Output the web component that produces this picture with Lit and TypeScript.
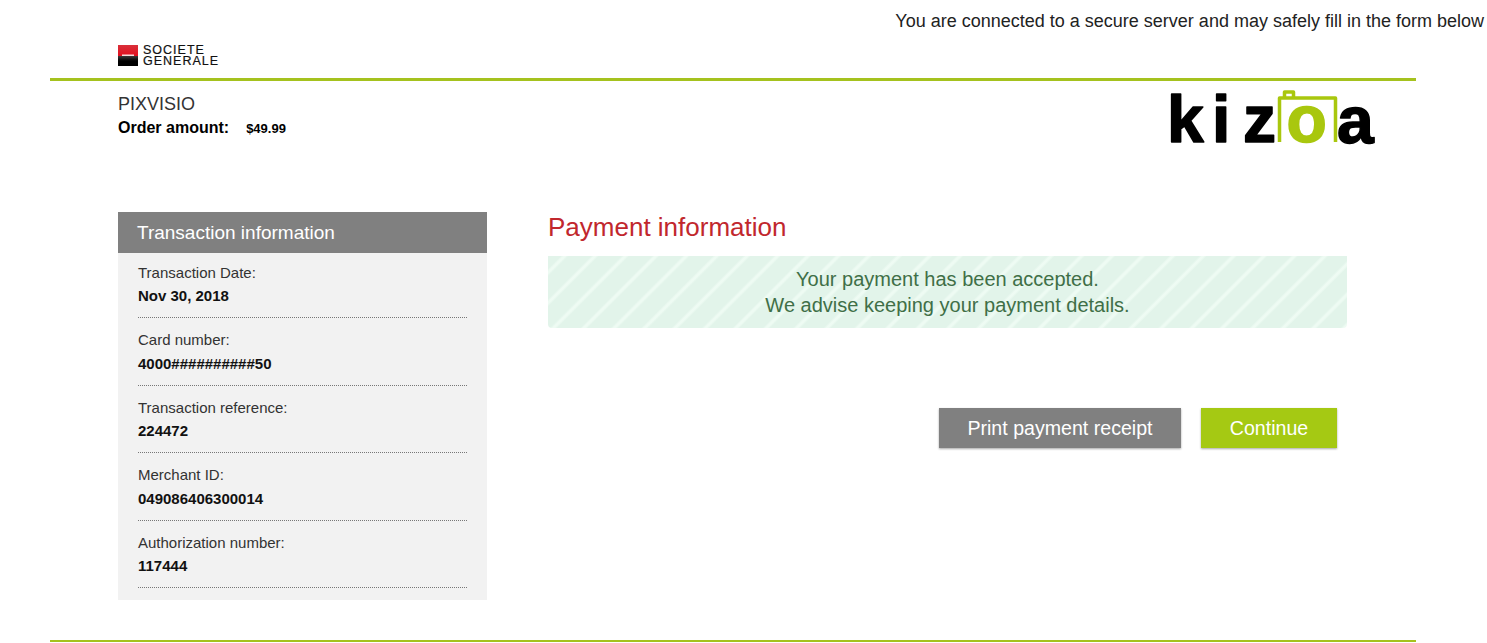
import { LitElement, html, css } from 'lit'
import { customElement } from 'lit/decorators.js'

const rows = [
  ['Transaction Date:', 'Nov 30, 2018'],
  ['Card number:', '4000##########50'],
  ['Transaction reference:', '224472'],
  ['Merchant ID:', '049086406300014'],
  ['Authorization number:', '117444'],
]

@customElement('app-root')
export class AppRoot extends LitElement {
  static styles = css`
    :host {
      display: block;
      width: 1487px;
      height: 643px;
      overflow: hidden;
      background: #fff;
      font-family: 'Liberation Sans', Arial, sans-serif;
      color: #333;
    }

    .secure {
      height: 42px;
      padding: 11px 3px 0 0;
      box-sizing: border-box;
      text-align: right;
      font-size: 18px;
      line-height: 20px;
      color: #222;
    }

    .page {
      width: 1366px;
      margin-left: 50px;
    }

    .bank {
      height: 36px;
      padding: 3px 0 0 68px;
      display: flex;
      align-items: flex-start;
      gap: 5px;
      box-sizing: border-box;
    }

    .bank-mark {
      display: block;
    }

    .bank-name {
      font-size: 12.5px;
      line-height: 11px;
      letter-spacing: 1px;
      color: #111;
      -webkit-text-stroke: 0.2px #111;
    }

    .rule {
      height: 3px;
      background: #a5c21e;
    }

    .order {
      height: 131px;
      padding: 13px 41px 0 68px;
      display: flex;
      justify-content: space-between;
      align-items: flex-start;
      box-sizing: border-box;
    }

    .merchant {
      font-size: 18px;
      line-height: 20px;
    }

    .amount {
      font-size: 16px;
      font-weight: bold;
      color: #000;
      line-height: 18px;
      margin-top: 5px;
      display: flex;
      align-items: baseline;
    }

    .amount small {
      font-size: 13px;
      margin-left: 17px;
    }

    .kizoa {
      display: block;
      margin-top: -14px;
    }

    .content {
      display: flex;
      gap: 61px;
      padding-left: 68px;
      align-items: flex-start;
    }

    .side {
      width: 369px;
      height: 388px;
      background: #f2f2f2;
    }

    .side h2 {
      margin: 0;
      height: 41px;
      padding-left: 19px;
      background: #808080;
      color: #fff;
      font-size: 19px;
      font-weight: normal;
      line-height: 41px;
    }

    .rows {
      padding: 9px 20px 0;
    }

    .row {
      height: 67.5px;
      box-sizing: border-box;
      border-bottom: 1px dotted #777;
      padding-top: 12.4px;
    }

    .row:first-child {
      height: 56px;
      padding-top: 0.8px;
    }

    .label {
      font-size: 15px;
      line-height: 20px;
    }

    .value {
      font-size: 15px;
      line-height: 20px;
      margin-top: 3.4px;
      font-weight: bold;
      color: #111;
    }

    .main {
      width: 799px;
    }

    .main h1 {
      margin: 0;
      height: 44px;
      color: #c1272d;
      font-size: 26px;
      font-weight: normal;
      line-height: 31px;
    }

    .alert {
      height: 72px;
      box-sizing: border-box;
      padding-top: 10px;
      border-radius: 0 0 4px 4px;
      background: repeating-linear-gradient(
        135deg,
        #e2f4ea 0,
        #e2f4ea 9px,
        #eefbf3 11px,
        #eefbf3 12.5px,
        #e2f4ea 14.5px,
        #e2f4ea 21.5px
      );
      color: #3f6f47;
      font-size: 20px;
      line-height: 26px;
      text-align: center;
    }

    .actions {
      display: flex;
      justify-content: flex-end;
      gap: 20px;
      margin-top: 80px;
      padding-right: 10px;
    }

    button {
      height: 40px;
      padding: 0;
      border: 0;
      font-family: inherit;
      font-size: 19.6px;
      color: #fff;
      box-shadow: 0 1px 2px rgba(0, 0, 0, 0.35);
    }

    .print {
      width: 242px;
      background: #808080;
    }

    .continue {
      width: 136px;
      background: #a5c913;
    }

    .foot {
      height: 2px;
      margin-top: 40px;
      background: #a5c21e;
    }
  `

  render() {
    return html`
      <div class="secure">You are connected to a secure server and may safely fill in the form below</div>
      <div class="page">
        <div class="bank">
          <svg class="bank-mark" width="20" height="21" viewBox="0 0 20 21">
            <defs>
              <linearGradient id="sgRed" x1="0" y1="0" x2="0" y2="1">
                <stop offset="0" stop-color="#d9303a" />
                <stop offset="1" stop-color="#e2101f" />
              </linearGradient>
              <linearGradient id="sgBlack" x1="0" y1="0" x2="0" y2="1">
                <stop offset="0" stop-color="#3a3a3a" />
                <stop offset="0.5" stop-color="#000" />
                <stop offset="1" stop-color="#000" />
              </linearGradient>
            </defs>
            <rect width="20" height="11" fill="url(#sgRed)" />
            <rect y="11" width="20" height="10" fill="url(#sgBlack)" />
            <rect x="4" y="9.5" width="12" height="1.5" fill="#f6dcdc" />
          </svg>
          <div class="bank-name">SOCIETE<br />GENERALE</div>
        </div>
        <div class="rule"></div>
        <div class="order">
          <div>
            <div class="merchant">PIXVISIO</div>
            <div class="amount">Order amount:<small>$49.99</small></div>
          </div>
          <svg class="kizoa" width="209" height="76" viewBox="-4 0 209 76" font-family="Liberation Sans, sans-serif" font-weight="bold" font-size="66" stroke-width="1.5" stroke-linejoin="round">
            <g fill="none" stroke="#a9c70e" stroke-width="3.5">
              <path d="M109.500 62 V18 H165.500 V62" />
              <path d="M114.500 17 V12 H123.500 V17" />
            </g>
            <text x="-3" y="62" fill="#000" stroke="#000">k</text>
            <text x="42" y="62" fill="#000" stroke="#000">i</text>
            <text x="73" y="62" fill="#000" stroke="#000">z</text>
            <text x="116.500" y="62" fill="#a9c70e" stroke="#a9c70e">o</text>
            <text x="167" y="63" fill="#000" stroke="#000">a</text>
          </svg>
        </div>
        <div class="content">
          <aside class="side">
            <h2>Transaction information</h2>
            <div class="rows">
              ${rows.map(
                ([label, value]) => html`
                  <div class="row">
                    <div class="label">${label}</div>
                    <div class="value">${value}</div>
                  </div>
                `
              )}
            </div>
          </aside>
          <section class="main">
            <h1>Payment information</h1>
            <div class="alert">Your payment has been accepted.<br />We advise keeping your payment details.</div>
            <div class="actions">
              <button class="print">Print payment receipt</button>
              <button class="continue">Continue</button>
            </div>
          </section>
        </div>
        <div class="foot"></div>
      </div>
    `
  }
}
